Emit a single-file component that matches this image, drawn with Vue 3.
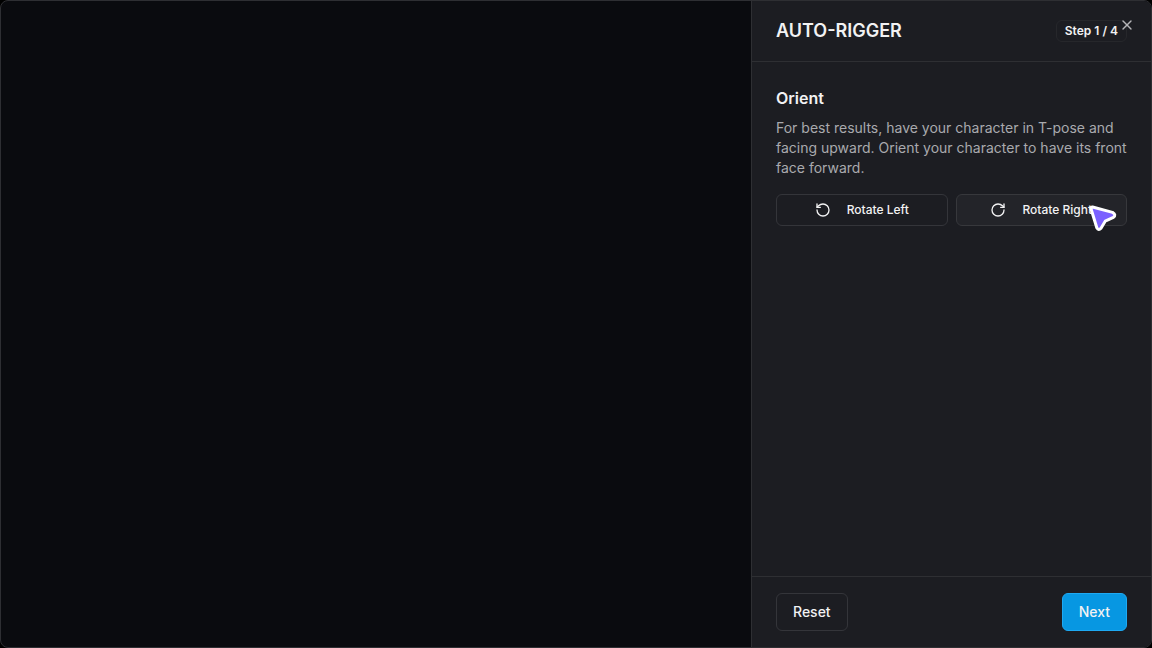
<script setup>
import { ref } from 'vue'

const step = ref(1)
const totalSteps = 4
</script>

<template>
  <div class="dialog" role="dialog" aria-labelledby="rigger-title">
    <main class="viewport" aria-label="Character preview"></main>

    <aside class="panel">
      <header class="panel-header">
        <h1 id="rigger-title">AUTO-RIGGER</h1>
        <span class="badge">Step {{ step }} / {{ totalSteps }}</span>
      </header>

      <section class="panel-body">
        <h2>Orient</h2>
        <p>
          For best results, have your character in T-pose and facing upward.
          Orient your character to have its front face forward.
        </p>
        <div class="rotate-row">
          <button type="button" class="btn small">
            <svg class="icon" viewBox="0 0 24 24" aria-hidden="true">
              <path d="M3 12a9 9 0 1 0 9-9 9.75 9.75 0 0 0-6.74 2.74L3 8" />
              <path d="M3 3v5h5" />
            </svg>
            Rotate Left
          </button>
          <button type="button" class="btn small hovered">
            <svg class="icon" viewBox="0 0 24 24" aria-hidden="true">
              <path d="M21 12a9 9 0 1 1-9-9c2.52 0 4.93 1 6.74 2.74L21 8" />
              <path d="M21 3v5h-5" />
            </svg>
            Rotate Right
            <svg class="pointer" viewBox="0 0 30 30" aria-hidden="true">
              <path d="M4.6 4 L24.5 9.4 Q28.6 11.8 25.4 14.4 L17.2 18.2 L13 25.2 Q10.6 28 8.8 24.8 L3 5.8 Q2.8 3.8 4.6 4 Z" />
            </svg>
          </button>
        </div>
      </section>

      <footer class="panel-footer">
        <button type="button" class="btn">Reset</button>
        <button type="button" class="btn primary">Next</button>
      </footer>
    </aside>

    <button type="button" class="close" aria-label="Close">
      <svg class="icon" viewBox="0 0 24 24" aria-hidden="true">
        <path d="M18 6 6 18" />
        <path d="m6 6 12 12" />
      </svg>
    </button>
  </div>
</template>

<style>
body {
  background: #000;
}
</style>

<style scoped>
.dialog,
.dialog * {
  box-sizing: border-box;
}

.dialog {
  position: relative;
  display: flex;
  min-height: 100vh;
  overflow: hidden;
  border: 1px solid #2e2f33;
  border-radius: 8px;
  background: #0a0b0f;
  color: #f2f2f3;
  font-family: Inter, "Liberation Sans", sans-serif;
}

.viewport {
  flex: 1;
}

.panel {
  display: flex;
  flex-direction: column;
  flex: 0 0 400px;
  border-left: 1px solid #2e2f33;
  background: #1c1d22;
}

.panel-header {
  display: flex;
  align-items: center;
  justify-content: space-between;
  padding: 16px 24px;
  border-bottom: 1px solid #2e2f33;
}

h1,
h2,
p {
  margin: 0;
}

h1 {
  font-size: 18px;
  line-height: 28px;
  font-weight: 600;
}

.badge {
  padding: 2px 8px;
  border: 1px solid #26272b;
  border-radius: 6px;
  font-size: 12px;
  line-height: 16px;
  font-weight: 600;
}

.panel-body {
  flex: 1;
  padding: 24px;
}

h2 {
  margin-bottom: 8px;
  font-size: 16px;
  line-height: 24px;
  font-weight: 600;
}

p {
  margin-bottom: 16px;
  color: #a9aaae;
  font-size: 14px;
  line-height: 20px;
}

.rotate-row {
  display: grid;
  grid-template-columns: 1fr 1fr;
  gap: 8px;
}

.btn {
  position: relative;
  display: inline-flex;
  align-items: center;
  justify-content: center;
  gap: 16px;
  height: 38px;
  padding: 0 16px;
  border: 1px solid #34353a;
  border-radius: 6px;
  background: transparent;
  color: inherit;
  font-family: inherit;
  font-size: 14px;
  line-height: 20px;
  font-weight: 500;
  white-space: nowrap;
}

.btn.small {
  height: 32px;
  padding: 0 12px;
  font-size: 12px;
  line-height: 16px;
}

.btn.hovered {
  background: #232429;
  border-color: #37383c;
}

.btn.primary {
  border-color: #1ea9f2;
  background: #0797e2;
}

.icon {
  width: 16px;
  height: 16px;
  fill: none;
  stroke: currentColor;
  stroke-width: 2;
  stroke-linecap: round;
  stroke-linejoin: round;
}

.pointer {
  position: absolute;
  top: 8px;
  right: 8px;
  width: 30px;
  height: 30px;
  fill: #7b61ff;
  stroke: #fff;
  stroke-width: 3;
  stroke-linejoin: round;
}

.panel-footer {
  display: flex;
  justify-content: space-between;
  padding: 16px 24px;
  border-top: 1px solid #2e2f33;
}

.close {
  position: absolute;
  top: 16px;
  right: 16px;
  display: flex;
  padding: 0;
  border: 0;
  background: none;
  color: #b5b5b8;
}
</style>
